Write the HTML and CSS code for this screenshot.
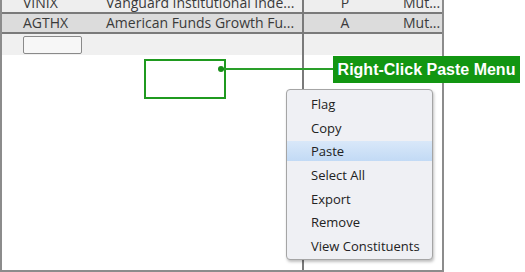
FILE: index.html
```html
<!DOCTYPE html>
<html lang="en">
<head>
    <meta charset="UTF-8">
    <title>Right-Click Paste Menu</title>
    <link rel="stylesheet" href="styles.css">
</head>
<body>
    <!-- table frame -->
    <div class="frame">
        <div class="col col-left">
            <div class="row row-light">
                <span class="sym">VINIX</span>
                <span class="name">Vanguard Institutional Inde...</span>
            </div>
            <div class="row row-dark">
                <span class="sym">AGTHX</span>
                <span class="name">American Funds Growth Fu...</span>
            </div>
            <div class="row row-edit">
                <span class="edit-box"></span>
            </div>
        </div>
        <div class="col col-right">
            <div class="row row-light">
                <span class="code">P</span>
                <span class="type">Mut...</span>
            </div>
            <div class="row row-dark">
                <span class="code">A</span>
                <span class="type">Mut...</span>
            </div>
            <div class="row row-edit"></div>
        </div>
    </div>

    <!-- callout -->
    <div class="callout-box"></div>
    <div class="callout-line"></div>
    <div class="callout-dot"></div>
    <div class="callout-label">Right-Click Paste Menu</div>

    <!-- context menu -->
    <ul class="menu">
        <li>Flag</li>
        <li>Copy</li>
        <li class="active">Paste</li>
        <li>Select All</li>
        <li>Export</li>
        <li>Remove</li>
        <li>View Constituents</li>
    </ul>
</body>
</html>
```

FILE: styles.css
```css
body {
    margin: 0;
    width: 525px;
    height: 272px;
    background: #fff;
    overflow: hidden;
    position: relative;
    font-family: "Open Sans", "Noto Sans", sans-serif;
}

.frame {
    display: flex;
    width: 440px;
    height: 276px;
    margin-top: -6px;
    border-left: 2px solid #8c8c8c;
    border-right: 2px solid #8c8c8c;
    border-bottom: 2px solid #8c8c8c;
}

.col {
    display: flex;
    flex-direction: column;
}

.col-left {
    width: 300px;
    border-right: 2px solid #7a7a7a;
}

.col-right {
    flex: 1;
}

.row {
    display: flex;
    align-items: center;
    height: 18px;
    font-size: 14px;
    line-height: 18px;
    color: #3a3a3a;
    white-space: nowrap;
    border-bottom: 2px solid #7a7a7a;
}

.row-light {
    background: #eeeeee;
}

.row-dark {
    background: #dcdcdc;
}

.row-edit {
    height: 21px;
    background: #f0f0f0;
    border-bottom: none;
}

.sym {
    width: 83px;
    padding-left: 21px;
}

.name {
    flex: 1;
}

.edit-box {
    width: 57px;
    height: 16px;
    margin-left: 21px;
    margin-top: 1px;
    border: 1px solid #8a8a8a;
    border-radius: 2px;
    background: #f7f7f7;
}

.code {
    width: 82px;
    text-align: center;
}

.type {
    padding-left: 17px;
}

/* callout pieces lie over the table */
.callout-box {
    position: absolute;
    left: 144px;
    top: 59px;
    width: 78px;
    height: 36px;
    border: 2px solid #1f9a1f;
}

.callout-line {
    position: absolute;
    left: 221px;
    top: 68px;
    width: 112px;
    height: 2px;
    background: #2a9f2a;
}

.callout-dot {
    position: absolute;
    left: 218px;
    top: 66px;
    width: 6px;
    height: 6px;
    border-radius: 50%;
    background: #1a8f1a;
}

.callout-label {
    position: absolute;
    left: 333px;
    top: 56px;
    width: 187px;
    height: 27px;
    background: #129612;
    color: #fff;
    font-family: "Liberation Sans", Arial, sans-serif;
    font-weight: bold;
    font-size: 16px;
    line-height: 27px;
    text-align: center;
}

.menu {
    position: absolute;
    left: 286px;
    top: 89px;
    width: 145px;
    height: 163px;
    margin: 0;
    padding: 4px 0 2px;
    list-style: none;
    display: flex;
    flex-direction: column;
    gap: 3.67px;
    background: #eff0f4;
    border: 1px solid #a5a5a5;
    border-radius: 4px;
    box-shadow: 1px 2px 3px rgba(0, 0, 0, 0.25);
    font-size: 13px;
    color: #222;
}

.menu li {
    height: 20px;
    line-height: 20px;
    padding-left: 24px;
}

.menu li.active {
    background: linear-gradient(#d9e8f9, #c2daf5);
}
```
